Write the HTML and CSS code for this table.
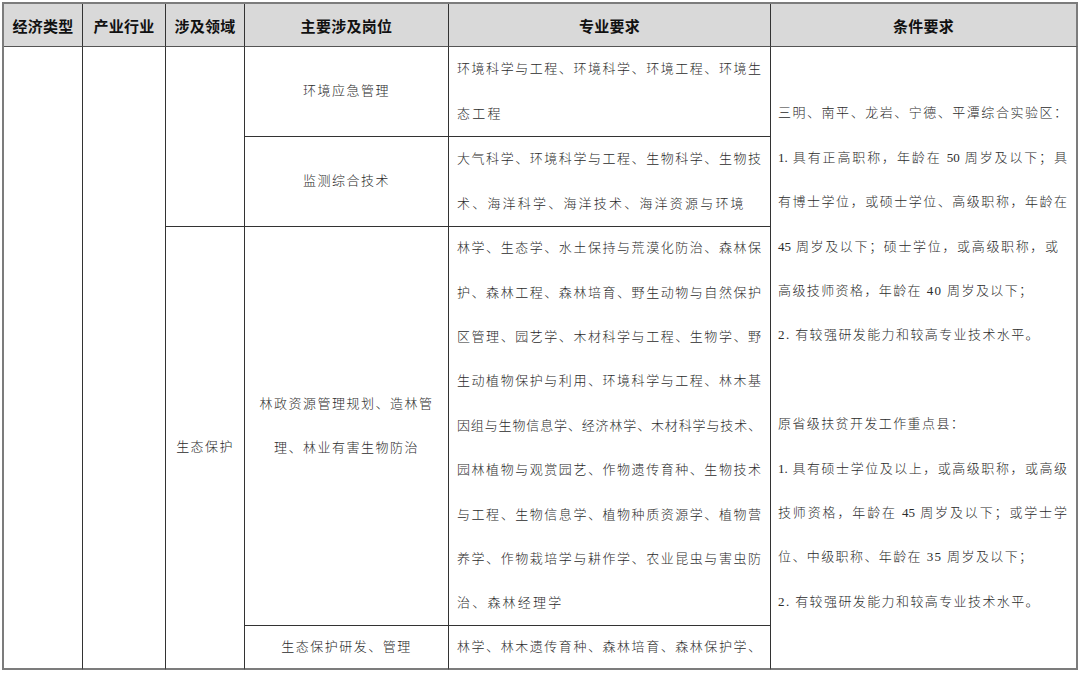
FILE: index.html
```html
<!DOCTYPE html>
<html lang="zh-CN">
<head>
<meta charset="utf-8">
<title>岗位需求表</title>
<link rel="stylesheet" href="styles.css">
</head>
<body>
<div class="sheet">
  <div class="hd h1">经济类型</div>
  <div class="hd h2">产业行业</div>
  <div class="hd h3">涉及领域</div>
  <div class="hd h4">主要涉及岗位</div>
  <div class="hd h5">专业要求</div>
  <div class="hd h6 end">条件要求</div>

  <div class="cell type foot"></div>
  <div class="cell industry foot"></div>
  <div class="cell field-a"></div>
  <div class="cell field-b foot"><span>生态保护</span></div>

  <div class="cell pos r1"><span class="ln">环境应急管理</span></div>
  <div class="cell pos r2"><span class="ln">监测综合技术</span></div>
  <div class="cell pos r3"><span class="ln">林政资源管理规划、造林管</span><span class="ln">理、林业有害生物防治</span></div>
  <div class="cell pos r4 foot"><span class="ln">生态保护研发、管理</span></div>

  <div class="cell major r1">
    <span class="ln j">环境科学与工程、环境科学、环境工程、环境生</span>
    <span class="ln">态工程</span>
  </div>
  <div class="cell major r2">
    <span class="ln j">大气科学、环境科学与工程、生物科学、生物技</span>
    <span class="ln">术、海洋科学、海洋技术、海洋资源与环境</span>
  </div>
  <div class="cell major r3">
    <span class="ln j">林学、生态学、水土保持与荒漠化防治、森林保</span>
    <span class="ln j">护、森林工程、森林培育、野生动物与自然保护</span>
    <span class="ln j">区管理、园艺学、木材科学与工程、生物学、野</span>
    <span class="ln j">生动植物保护与利用、环境科学与工程、林木基</span>
    <span class="ln j">因组与生物信息学、经济林学、木材科学与技术、</span>
    <span class="ln j">园林植物与观赏园艺、作物遗传育种、生物技术</span>
    <span class="ln j">与工程、生物信息学、植物种质资源学、植物营</span>
    <span class="ln j">养学、作物栽培学与耕作学、农业昆虫与害虫防</span>
    <span class="ln">治、森林经理学</span>
  </div>
  <div class="cell major r4 foot">
    <span class="ln j">林学、林木遗传育种、森林培育、森林保护学、</span>
  </div>

  <div class="cell cond end foot">
    <span class="ln j">三明、南平、龙岩、宁德、平潭综合实验区：</span>
    <span class="ln j">1. 具有正高职称，年龄在 50 周岁及以下；具</span>
    <span class="ln j">有博士学位，或硕士学位、高级职称，年龄在</span>
    <span class="ln j short">45 周岁及以下；硕士学位，或高级职称，或</span>
    <span class="ln">高级技师资格，年龄在 40 周岁及以下；</span>
    <span class="ln">2. 有较强研发能力和较高专业技术水平。</span>
    <span class="ln gap"></span>
    <span class="ln">原省级扶贫开发工作重点县：</span>
    <span class="ln j">1. 具有硕士学位及以上，或高级职称，或高级</span>
    <span class="ln j">技师资格，年龄在 45 周岁及以下；或学士学</span>
    <span class="ln">位、中级职称、年龄在 35 周岁及以下；</span>
    <span class="ln">2. 有较强研发能力和较高专业技术水平。</span>
  </div>
</div>
</body>
</html>
```

FILE: styles.css
```css
html, body {
  margin: 0;
  padding: 0;
  background: #ffffff;
}

body {
  font-family: "Liberation Serif", "Noto Sans CJK SC", serif;
  color: #2b2b2b;
}

.sheet {
  display: grid;
  grid-template-columns: 79px 83px 79px 204px 322px 307px;
  grid-template-rows: 43px 90px 90px 399px 44px;
  width: max-content;
  margin: 2px 0 0 2px;
  border-top: 2px solid #7c7c7c;
  border-left: 2px solid #7c7c7c;
}

.hd,
.cell {
  box-sizing: border-box;
  border-right: 1px solid #333333;
  border-bottom: 1px solid #333333;
}

.end {
  border-right: 2px solid #7c7c7c;
}

.foot {
  border-bottom: 2px solid #7c7c7c;
}

/* header */
.hd {
  grid-row: 1;
  display: flex;
  align-items: center;
  justify-content: center;
  background: #d9d9d9;
  font-family: "Noto Sans CJK SC", sans-serif;
  font-weight: 700;
  font-size: 15px;
  letter-spacing: 0.3px;
  color: #111111;
  border-bottom-color: #555555;
}
.h1 { grid-column: 1; }
.h2 { grid-column: 2; }
.h3 { grid-column: 3; }
.h4 { grid-column: 4; }
.h5 { grid-column: 5; }
.h6 { grid-column: 6; }

/* body cells */
.cell {
  font-size: 13px;
  font-weight: 300;
  line-height: 44.4px;
}

.type { grid-column: 1; grid-row: 2 / 6; }
.industry { grid-column: 2; grid-row: 2 / 6; }
.field-a { grid-column: 3; grid-row: 2 / 4; }
.field-b {
  grid-column: 3;
  grid-row: 4 / 6;
  display: flex;
  align-items: center;
  justify-content: center;
  letter-spacing: 1.4px;
}

.r1 { grid-row: 2; }
.r2 { grid-row: 3; }
.r3 { grid-row: 4; }
.r4 { grid-row: 5; }

.ln {
  display: block;
}

.pos {
  grid-column: 4;
  display: flex;
  flex-direction: column;
  justify-content: center;
  text-align: center;
  letter-spacing: 1.5px;
}

.major {
  grid-column: 5;
  display: flex;
  flex-direction: column;
  justify-content: center;
  padding: 0 9px 0 8px;
  letter-spacing: 2.2px;
}

.cond {
  grid-column: 6;
  grid-row: 2 / 6;
  padding: 44.4px 9px 0 7px;
  letter-spacing: 1.4px;
}

.j {
  letter-spacing: 0;
  text-align: justify;
  text-align-last: justify;
}

.cond .short {
  margin-right: 9px;
}

.gap {
  height: 44.4px;
}
```
